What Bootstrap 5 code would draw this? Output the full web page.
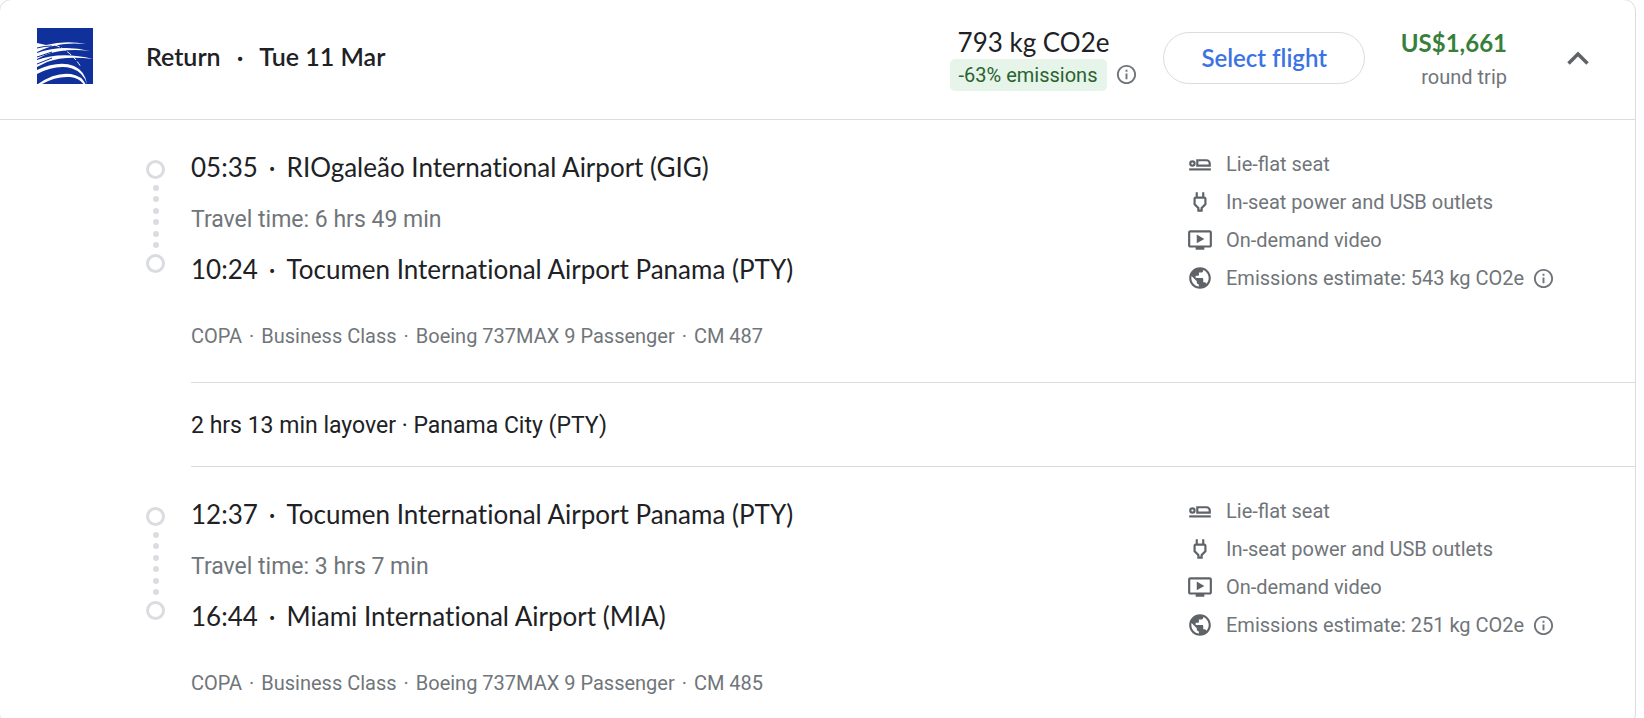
<!DOCTYPE html>
<html lang="en">
<head>
<meta charset="utf-8">
<meta name="viewport" content="width=device-width, initial-scale=1">
<title>Return flight details</title>
<link href="https://cdn.jsdelivr.net/npm/bootstrap@5.3.0/dist/css/bootstrap.min.css" rel="stylesheet">
<style>
  :root { --ink: #202124; --muted-ink: #70757a; --icon-ink: #5f6368; --rule: #dadce0; }
  body { font-family: Roboto, "Liberation Sans", sans-serif; font-size: 20px; line-height: 24px; color: var(--ink); background: #fff; }
  svg { display: block; flex: none; }
  .display-face { font-family: Lato, "Liberation Sans", sans-serif; font-variant-ligatures: none; }
  .flight-card { margin: -1px 8px 0 -1px; border: 1px solid var(--rule); border-radius: 12px; }
  .flight-head { min-height: 120px; padding: 0 40px 3px 37px; border-bottom: 1px solid var(--rule); }
  .flight-title { font-size: 25px; line-height: 32px; font-weight: 600; margin: 0 0 0 53px; }
  .sep { margin: 0 11px; }
  .flight-title .sep { margin: 0 16px; }
  .sep-sm { margin: 0 2px; }
  .figure-lg { font-size: 26px; line-height: 32px; }
  .co2-block { margin-right: 25px; }
  .co2-total { padding-left: 8px; margin-bottom: 1px; }
  .co2-chip { background: #e6f4ea; color: #29632f; border-radius: 5px; padding: 4px 10px 4px 9px; }
  .info-btn { border: 0; background: none; padding: 0; color: var(--muted-ink); }
  .btn-select { --bs-btn-color: #3b73e6; --bs-btn-border-color: #dadce0; --bs-btn-hover-color: #1a56cc; --bs-btn-hover-bg: #f6f9fe; --bs-btn-hover-border-color: #dadce0;
    --bs-btn-font-size: 24px; --bs-btn-line-height: 30px; --bs-btn-padding-x: 37px; --bs-btn-padding-y: 10px; --bs-btn-font-weight: 600; --bs-btn-border-radius: 26px; }
  .head-actions { margin-right: 54px; width: 142px; }
  .fare { font-size: 24px; line-height: 32px; font-weight: 700; color: #37803c; margin-bottom: 6px; }
  .quiet { color: var(--muted-ink); }
  .segment { padding: 25px 0 34px 146px; }
  .segment:last-child { padding-bottom: 30px; }
  .rail { width: 19px; height: 113px; margin: 15px 26px 0 0; }
  .ring { width: 19px; height: 19px; border: 3px solid var(--rule); border-radius: 50%; }
  .dot { width: 6px; height: 6px; border-radius: 50%; background: var(--rule); }
  .stops { padding-top: 6px; }
  .travel { font-size: 23px; line-height: 28px; margin: 23px 0 19px; }
  .aircraft { margin-top: 39px; }
  .amenities { width: 448px; color: var(--muted-ink); }
  .amenities li { height: 38px; }
  .amenities .glyph { color: var(--icon-ink); margin-right: 13px; }
  .layover { margin-left: 191px; padding: 29px 0 26px; border: solid var(--rule); border-width: 1px 0; font-size: 23px; line-height: 28px; }
</style>
</head>
<body class="overflow-hidden vh-100">
<svg width="0" height="0" class="position-absolute" aria-hidden="true">
  <symbol id="i-info" viewBox="0 0 24 24"><path fill="currentColor" d="M11 7h2v2h-2zm0 4h2v6h-2zm1-9C6.480 2 2 6.480 2 12s4.480 10 10 10 10-4.480 10-10S17.520 2 12 2zm0 18c-4.410 0-8-3.590-8-8s3.590-8 8-8 8 3.590 8 8-3.590 8-8 8z"/></symbol>
  <symbol id="i-seat" viewBox="0 0 24 24"><g fill="none" stroke="currentColor" stroke-width="2"><path d="M2 17h20"/><circle cx="5" cy="11.500" r="2"/><path d="M9.500 13.500V8.500h8.500a3 3 0 0 1 3 3v2z"/></g></symbol>
  <symbol id="i-plug" viewBox="0 0 24 24"><path fill="currentColor" d="M16 9v4.660l-3.500 3.510V19h-1v-1.830L8 13.650V9h8m0-6h-2v4h-4V3H8v4h-.010C6.900 6.990 6 7.890 6 8.980v5.520L9.500 18v3h5v-3l3.500-3.510V9c0-1.100-.9-2-2-2V3z"/></symbol>
  <symbol id="i-video" viewBox="0 0 24 24"><path fill="currentColor" d="M21 3H3c-1.110 0-2 .89-2 2v12c0 1.100.89 2 2 2h5v2h8v-2h5c1.100 0 1.990-.9 1.990-2L23 5c0-1.110-.9-2-2-2zm0 14H3V5h18v12zM9 7v8l7-4z"/></symbol>
  <symbol id="i-globe" viewBox="0 0 24 24"><path fill="currentColor" d="M12 2C6.480 2 2 6.480 2 12s4.480 10 10 10 10-4.480 10-10S17.520 2 12 2zm-1 17.930c-3.950-.49-7-3.850-7-7.930 0-.62.080-1.210.210-1.790L9 15v1c0 1.100.9 2 2 2v1.930zm6.900-2.540c-.26-.81-1-1.390-1.900-1.390h-1v-3c0-.55-.45-1-1-1H8v-2h2c.55 0 1-.45 1-1V7h2c1.100 0 2-.9 2-2v-.41c2.930 1.190 5 4.060 5 7.410 0 2.080-.8 3.970-2.100 5.390z"/></symbol>
</svg>

<main class="flight-card">
  <header class="flight-head d-flex align-items-center">
    <div class="d-flex align-items-center pb-1">
      <svg width="56" height="56" viewBox="0 0 56 56" role="img" aria-label="Copa Airlines">
        <path fill="#10309c" d="M0 0h56v56H0z"/>
        <g fill="#fff">
          <path d="M0 15l9 2q20-5 40-1-19-2-35 2.500Q6 21 0 24z"/>
          <path d="M0 25Q25 16 53 23 27 20 8 27l-8 4z"/>
          <path d="M0 32Q24 23 56 31 27 27.500 10 34L0 39z"/>
          <path d="M0 42Q22 32 37 38q11 5 13 18-4-12-15-15.500Q20 36 0 46z"/>
          <path d="M1 56q17-12 33-10 11 2 14.500 10h-2Q42 50 33 49 19 48 5 56z"/>
        </g>
        <path d="M18 17q16 6 26 22" fill="none" stroke="#fff" stroke-width="1" stroke-dasharray="5 2"/>
        <path d="M0 20q7-2 15-2M0 29l15-5M0 36l15-6" fill="none" stroke="#10309c"/>
      </svg>
      <h1 class="flight-title display-face">Return<span class="sep">·</span>Tue 11 Mar</h1>
    </div>

    <div class="co2-block ms-auto">
      <div class="figure-lg display-face co2-total">793 kg CO2e</div>
      <div class="d-flex align-items-center">
        <span class="co2-chip">-63% emissions</span>
        <button type="button" class="info-btn ms-2" aria-label="About emissions"><svg width="23" height="23" aria-hidden="true"><use href="#i-info"/></svg></button>
      </div>
    </div>
    <button type="button" class="btn btn-select display-face">Select flight</button>
    <div class="head-actions text-end">
      <div class="fare display-face">US$1,661</div>
      <div class="quiet">round trip</div>
    </div>
    <button type="button" class="info-btn" aria-label="Hide flight details" aria-expanded="true">
      <svg width="34" height="34" viewBox="0 0 34 34" fill="none" stroke="#5f6368" stroke-width="3.500" aria-hidden="true"><path d="M7.500 22.500l9.500-9.500 9.500 9.500"/></svg>
    </button>
  </header>

  <section class="segment d-flex">
    <div class="rail d-flex flex-column justify-content-between align-items-center" aria-hidden="true">
      <span class="ring"></span><span class="dot"></span><span class="dot"></span><span class="dot"></span><span class="dot"></span><span class="dot"></span><span class="dot"></span><span class="ring"></span>
    </div>
    <div class="stops flex-grow-1">
      <div class="figure-lg display-face">05:35<span class="sep">·</span>RIOgaleão International Airport (GIG)</div>
      <div class="travel quiet">Travel time: 6 hrs 49 min</div>
      <div class="figure-lg display-face">10:24<span class="sep">·</span>Tocumen International Airport Panama (PTY)</div>
      <div class="aircraft quiet">COPA <span class="sep-sm">·</span> Business Class <span class="sep-sm">·</span> Boeing 737MAX 9 Passenger <span class="sep-sm">·</span> CM 487</div>
    </div>
    <ul class="amenities list-unstyled mb-0">
      <li class="d-flex align-items-center"><svg class="glyph" width="26" height="26"><use href="#i-seat"/></svg>Lie-flat seat</li>
      <li class="d-flex align-items-center"><svg class="glyph" width="26" height="26"><use href="#i-plug"/></svg>In-seat power and USB outlets</li>
      <li class="d-flex align-items-center"><svg class="glyph" width="26" height="26"><use href="#i-video"/></svg>On-demand video</li>
      <li class="d-flex align-items-center"><svg class="glyph" width="26" height="26"><use href="#i-globe"/></svg>Emissions estimate: 543 kg CO2e<button type="button" class="info-btn ms-2" aria-label="About this estimate"><svg width="23" height="23"><use href="#i-info"/></svg></button></li>
    </ul>
  </section>

  <div class="layover">2 hrs 13 min layover · Panama City (PTY)</div>

  <section class="segment d-flex">
    <div class="rail d-flex flex-column justify-content-between align-items-center" aria-hidden="true">
      <span class="ring"></span><span class="dot"></span><span class="dot"></span><span class="dot"></span><span class="dot"></span><span class="dot"></span><span class="dot"></span><span class="ring"></span>
    </div>
    <div class="stops flex-grow-1">
      <div class="figure-lg display-face">12:37<span class="sep">·</span>Tocumen International Airport Panama (PTY)</div>
      <div class="travel quiet">Travel time: 3 hrs 7 min</div>
      <div class="figure-lg display-face">16:44<span class="sep">·</span>Miami International Airport (MIA)</div>
      <div class="aircraft quiet">COPA <span class="sep-sm">·</span> Business Class <span class="sep-sm">·</span> Boeing 737MAX 9 Passenger <span class="sep-sm">·</span> CM 485</div>
    </div>
    <ul class="amenities list-unstyled mb-0">
      <li class="d-flex align-items-center"><svg class="glyph" width="26" height="26"><use href="#i-seat"/></svg>Lie-flat seat</li>
      <li class="d-flex align-items-center"><svg class="glyph" width="26" height="26"><use href="#i-plug"/></svg>In-seat power and USB outlets</li>
      <li class="d-flex align-items-center"><svg class="glyph" width="26" height="26"><use href="#i-video"/></svg>On-demand video</li>
      <li class="d-flex align-items-center"><svg class="glyph" width="26" height="26"><use href="#i-globe"/></svg>Emissions estimate: 251 kg CO2e<button type="button" class="info-btn ms-2" aria-label="About this estimate"><svg width="23" height="23"><use href="#i-info"/></svg></button></li>
    </ul>
  </section>
</main>
<script src="https://cdn.jsdelivr.net/npm/bootstrap@5.3.0/dist/js/bootstrap.bundle.min.js"></script>
</body>
</html>
